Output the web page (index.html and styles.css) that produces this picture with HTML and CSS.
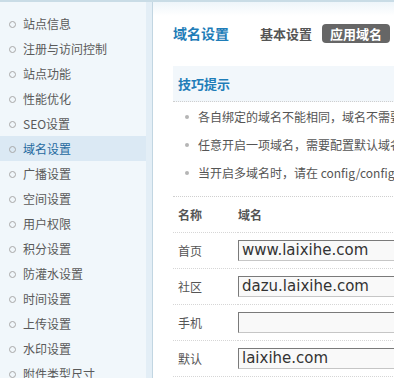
FILE: index.html
```html
<!DOCTYPE html>
<html lang="zh-CN">
<head>
  <meta charset="UTF-8">
  <title>域名设置</title>
  <link rel="stylesheet" href="styles.css">
</head>
<body>

<div class="page">
  <ul class="side-menu">
    <li>站点信息</li>
    <li>注册与访问控制</li>
    <li>站点功能</li>
    <li>性能优化</li>
    <li>SEO设置</li>
    <li class="active">域名设置</li>
    <li>广播设置</li>
    <li>空间设置</li>
    <li>用户权限</li>
    <li>积分设置</li>
    <li>防灌水设置</li>
    <li>时间设置</li>
    <li>上传设置</li>
    <li>水印设置</li>
    <li>附件类型尺寸</li>
  </ul>

  <div class="main">
    <div class="main-head">
      <h1>域名设置</h1>
      <a class="tab">基本设置</a>
      <a class="tab current">应用域名</a>
    </div>

    <div class="tips-title">技巧提示</div>
    <ul class="tips">
      <li>各自绑定的域名不能相同，域名不需要添加 http://</li>
      <li>任意开启一项域名，需要配置默认域名，否则可能无法访问</li>
      <li>当开启多域名时，请在 config/config_global.php 中设置</li>
    </ul>

    <table class="domains">
      <tr>
        <th class="col-name">名称</th>
        <th class="col-domain">域名</th>
      </tr>
      <tr>
        <td>首页</td>
        <td class="col-domain"><input type="text" value="www.laixihe.com"></td>
      </tr>
      <tr>
        <td>社区</td>
        <td class="col-domain"><input type="text" value="dazu.laixihe.com"></td>
      </tr>
      <tr>
        <td>手机</td>
        <td class="col-domain"><input type="text" value=""></td>
      </tr>
      <tr>
        <td>默认</td>
        <td class="col-domain"><input type="text" value="laixihe.com"></td>
      </tr>
    </table>
  </div>
</div>

</body>
</html>
```

FILE: styles.css
```css
* {
  margin: 0;
  padding: 0;
  box-sizing: border-box;
}

body {
  font-family: "Noto Sans CJK SC", "DejaVu Sans", sans-serif;
  font-size: 12px;
  color: #555;
  background: #fff;
  overflow: hidden;
}

.page {
  display: flex;
  border-top: 2px solid #c9dce6;
  min-height: 376px;
}

/* left menu */
.side-menu {
  list-style: none;
  width: 153px;
  flex-shrink: 0;
  padding-top: 9px;
  background: linear-gradient(to right, #f1f7fb 146px, #e3eef6 146px);
  border-right: 1px solid #c2d6e2;
}

.side-menu li {
  height: 25px;
  line-height: 25px;
  width: 146px;
  padding-left: 23px;
  position: relative;
  color: #5a5a5a;
  white-space: nowrap;
}

.side-menu li::before {
  content: "";
  position: absolute;
  left: 9px;
  top: 10px;
  width: 5px;
  height: 5px;
  border: 1px solid #a8a8a8;
  border-radius: 50%;
}

.side-menu li.active {
  background: #dbe9f4;
  color: #25699f;
}

/* main area */
.main {
  flex: 1;
  padding-left: 20px;
  background: linear-gradient(to bottom, #eef5fa 0, #fff 14px);
  white-space: nowrap;
}

.main-head {
  display: flex;
  align-items: center;
  padding-top: 19px;
  height: 43px;
}

.main-head h1 {
  font-size: 14px;
  color: #1f7db8;
  width: 87px;
}

.tab {
  font-size: 13px;
  font-weight: bold;
  color: #555;
  margin-right: 10px;
}

.tab.current {
  background: #666;
  color: #fff;
  border-radius: 4px;
  padding: 0 8px;
  line-height: 19px;
  margin-top: 1px;
}

.tips-title {
  margin-top: 21px;
  height: 36px;
  line-height: 36px;
  padding-left: 5px;
  background: #f2f7fb;
  border-bottom: 1px dotted #cfcfcf;
  font-size: 13px;
  font-weight: bold;
  color: #1f7db8;
}

.tips {
  list-style: none;
  padding: 1px 0 9px 25px;
  border-bottom: 1px dotted #cfcfcf;
}

.tips li {
  line-height: 28px;
  position: relative;
}

.tips li::before {
  content: "";
  position: absolute;
  left: -13px;
  top: 12px;
  width: 4px;
  height: 4px;
  border-radius: 50%;
  background: #b5b5b5;
}

.domains {
  border-collapse: collapse;
  width: 400px;
}

.domains th,
.domains td {
  text-align: left;
  height: 36px;
  border-bottom: 1px dotted #d6d6d6;
  padding-left: 5px;
  font-size: 12px;
}

.domains th {
  height: 35px;
  font-weight: bold;
}

.domains .col-name {
  width: 65px;
}

.domains .col-domain {
  padding-left: 0;
}

.domains td input {
  width: 230px;
  height: 21px;
  border: 1px solid #c6c6c6;
  border-top-color: #7a7a7a;
  border-left-color: #7a7a7a;
  background: #f9f9f9;
  font-family: "DejaVu Sans", sans-serif;
  font-size: 15px;
  color: #333;
  padding-left: 3px;
  outline: none;
}
```
